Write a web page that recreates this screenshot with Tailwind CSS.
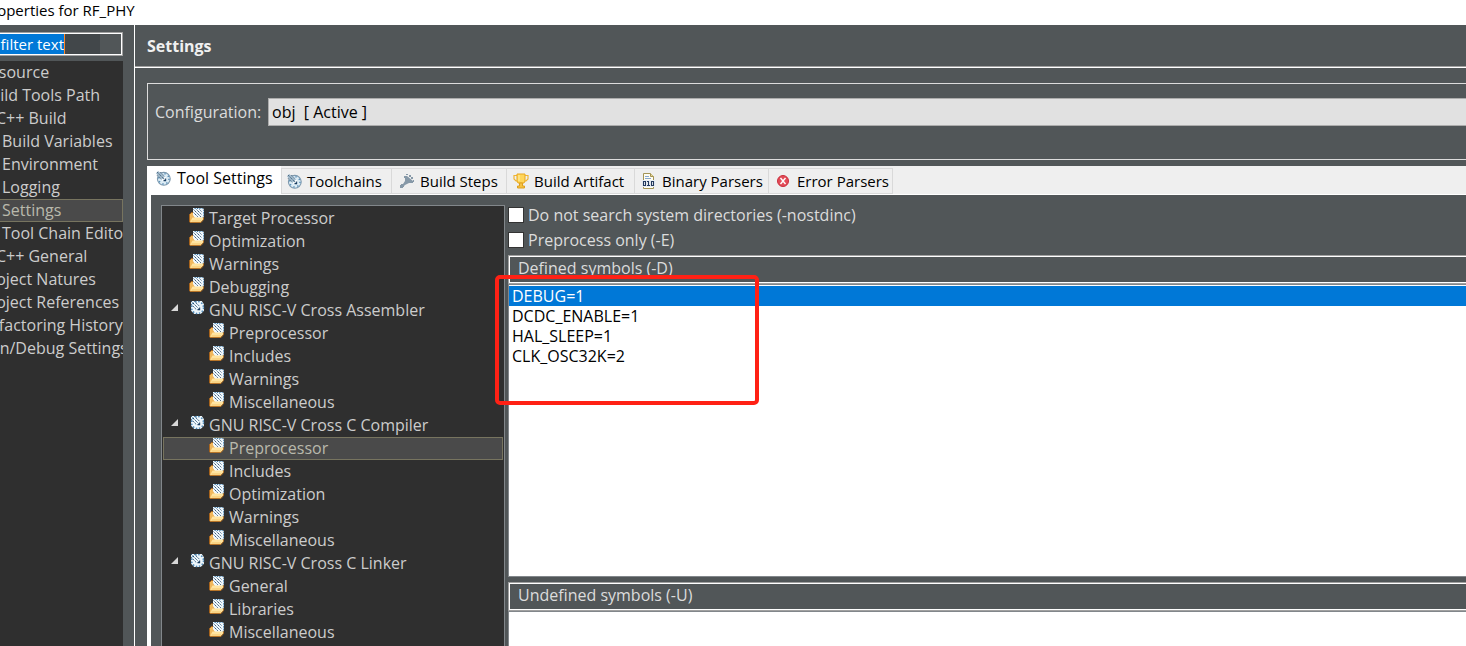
<!DOCTYPE html>
<html lang="en">
<head>
<meta charset="utf-8">
<title>Properties for RF_PHY</title>
<script src="https://cdn.jsdelivr.net/npm/@tailwindcss/browser@4"></script>
</head>
<body class="h-screen overflow-hidden bg-[#515658] font-['Open_Sans','Noto_Sans',sans-serif] text-[16px] leading-[23px] text-[#dcdcdc]">
<svg class="hidden" aria-hidden="true">
  <symbol id="gauge" viewBox="0 0 14 14">
    <circle cx="7.3" cy="7.3" r="6" fill="#dcecf5" stroke="#7d98ad" stroke-width="1"/>
    <circle cx="7.3" cy="7.3" r="4.8" fill="none" stroke="#5b8fb8" stroke-width="1.4" stroke-dasharray="1.2 2.57"/>
    <circle cx="7.5" cy="7.5" r="2.2" fill="#fff"/>
    <path d="M0 2 2 0 7 4 8 8 4 7z" fill="#9db6c8"/>
    <path d="M1 1 8 8M1 4 5 8M4 1 8 5" stroke="#37556f" stroke-width=".8" stroke-dasharray="1.2 .9"/>
    <path d="M7 9h2v-2" fill="none" stroke="#173c61"/>
  </symbol>
  <symbol id="ball" viewBox="0 0 14 14">
    <path d="M1 1h10l2 3v6l-3 3H4l-3-3z" fill="#eef7fc"/>
    <circle cx="7" cy="7" r="5.600" fill="none" stroke="#4a86b5" stroke-width="1.4" stroke-dasharray="1.4 1.53"/>
    <path d="M1 1 8 8M1 4 6 9M4 1 9 6" stroke="#244b6d" stroke-width=".9" stroke-dasharray="1.6 .7"/>
    <path d="M7 9h2v-2" fill="none" stroke="#173c61"/>
  </symbol>
  <symbol id="folder" viewBox="0 0 16 16">
    <path d="M.5 13V6.500l2-2H5l1 1h7.500V11L11 14H.5z" fill="#f0b75b" stroke="#a8641c"/>
    <path d="M4 0h10l1 2v6l-1 2H6L4 7z" fill="#f2f9fd"/>
    <path d="M5.500.5h8l1 2v5l-1 2" fill="none" stroke="#3c7cae" stroke-dasharray="1.300 1.100"/>
    <path d="M4.500 1.500 12 9M4.500 4.500 9 9M7.500 1.500l5 5M10.500 1.500l2 2" stroke="#21476a" stroke-width=".9" stroke-dasharray="1.600 .6"/>
    <path d="M1 14 3.500 9.500h11v1.500L12 14z" fill="#ffe4a0"/>
    <path d="M1 14.500h11l2.500-3v-2" fill="none" stroke="#b87528"/>
    <path d="M2.500 13H12" stroke="#f4c469"/>
  </symbol>
  <symbol id="steps" viewBox="0 0 16 16">
    <path d="M5 3h3l6 5v2h-4l-4 2-1 1v1H4v1H1v-3h1v-1h2l2-3V5H5z" fill="#8799a8"/>
    <path d="M7 1h2v1H7zM10 2h2v2h-2zM12 4h2v2h-2zM14 7h1v2h-1z" fill="#8799a8"/>
  </symbol>
  <symbol id="trophy" viewBox="0 0 16 16">
    <path d="M4 2.5H1V6l2 2h2M12 2.5h3V6l-2 2h-2" fill="none" stroke="#eeb432" stroke-width="1.2"/>
    <path d="M4 1h8v7l-1 2H5L4 8z" fill="#ffd65b" stroke="#e9a71e"/>
    <path d="M6 2v6" stroke="#fff0a8"/>
    <path d="M6.500 10h3v3h2v2h-7v-2h2z" fill="#f6c242" stroke="#dda021"/>
  </symbol>
  <symbol id="binary" viewBox="0 0 14 16">
    <path d="M1.5.5h7l3 3v12h-10z" fill="#fffdf2" stroke="#a39456"/>
    <path d="M8.500.5v3h3" fill="#ead998" stroke="#a39456"/>
    <path d="M3 3.500h4M3 5.500h6" stroke="#86a7cf"/>
    <path d="M0 7h14v7H0z" fill="#e9eef3"/>
    <path d="M1.500 8.500h2v4h-2zM5 8.500h1.500v4M5 12.500h3M9.500 8.500h2v4h-2z" fill="none" stroke="#23395d" stroke-width="1.100"/>
  </symbol>
  <symbol id="error" viewBox="0 0 12 12">
    <circle cx="6" cy="6" r="5.500" fill="#e34b57" stroke="#c92f3d"/>
    <path d="m3.500 3 5 6M8.500 3l-5 6" stroke="#fff" stroke-width="1.400"/>
  </symbol>
</svg>

<div class="flex h-screen flex-col">
  <header class="h-[25px] shrink-0 overflow-hidden bg-white text-black">
    <h1 class="-ml-[18px] text-[15px] leading-5 whitespace-nowrap">Properties for RF_PHY</h1>
  </header>

  <div class="flex min-h-0 flex-1">
    <aside class="flex w-[134px] shrink-0 flex-col overflow-hidden pt-[7px] pr-[11px]">
      <div class="flex h-6 shrink-0 overflow-hidden border border-l-0 border-[#a0a0a0]">
        <div class="flex flex-1 border-y border-r border-white">
          <input aria-label="Filter" value="type filter text" class="-ml-[50px] h-5 w-[114px] shrink-0 bg-[#0078d7] text-right text-[15px] text-white outline-none">
          <span class="w-9 shrink-0 border-l border-[#ff8728] bg-[#42474a]"></span>
        </div>
      </div>
      <ul role="tree" aria-label="Pages" class="mt-[5px] flex-1 overflow-hidden bg-[#2f2f2f] whitespace-nowrap text-[#cccccc]">
        <li role="treeitem" class="-ml-5">Resource</li>
        <li role="treeitem" class="-ml-5">Build Tools Path</li>
        <li role="treeitem" class="-ml-5">C/C++ Build</li>
        <li role="treeitem" class="pl-0.5">Build Variables</li>
        <li role="treeitem" class="pl-0.5">Environment</li>
        <li role="treeitem" class="pl-0.5">Logging</li>
        <li role="treeitem" aria-selected="true" class="border border-l-0 border-[#77745f] bg-[#4a4a4a] pl-0.5 leading-[21px] text-[#b9b9ac]">Settings</li>
        <li role="treeitem" class="pl-0.5">Tool Chain Editor</li>
        <li role="treeitem" class="-ml-5">C/C++ General</li>
        <li role="treeitem" class="-ml-5">Project Natures</li>
        <li role="treeitem" class="-ml-5">Project References</li>
        <li role="treeitem" class="-ml-5">Refactoring History</li>
        <li role="treeitem" class="-ml-5">Run/Debug Settings</li>
      </ul>
    </aside>

    <main class="flex min-w-0 flex-1 flex-col border-l border-white">
      <div class="h-[42px] shrink-0 border-b border-[#a0a0a0] pl-3">
        <h2 class="leading-[43px] font-bold text-[#f0f0f0]">Settings</h2>
      </div>
      <div class="h-px shrink-0 bg-white"></div>

      <div class="flex min-h-0 flex-1 flex-col pt-[15px] pl-3">
        <div class="flex h-[77px] shrink-0 items-start border border-r-0 border-[#dcdcdc] pt-3.5 pl-[7px]">
          <label for="configuration" class="w-[113px] shrink-0 leading-7">Configuration:</label>
          <select id="configuration" class="h-7 min-w-0 flex-1 appearance-none border border-r-0 border-[#acacac] bg-[#e1e1e1] pl-[3px] text-black">
            <option>obj&nbsp; [ Active ]</option>
          </select>
        </div>

        <div role="tablist" class="mt-1.5 flex h-[29px] shrink-0 items-end border-b border-white bg-[#efefef] text-[15px] whitespace-nowrap text-black">
          <button role="tab" aria-selected="true" class="flex h-7 w-[134px] items-center gap-1.5 bg-white pb-1 pl-[9px] text-[16px]"><svg class="size-[15px]"><use href="#gauge"/></svg>Tool Settings</button>
          <button role="tab" class="flex h-[26px] w-[111px] items-center gap-[5px] border border-[#d9d9d9] pl-[5px]"><svg class="size-[15px]"><use href="#gauge"/></svg>Toolchains</button>
          <button role="tab" class="flex h-[26px] w-[115px] items-center gap-[5px] border border-l-0 border-[#d9d9d9] pl-[7px]"><svg class="size-4"><use href="#steps"/></svg>Build Steps</button>
          <button role="tab" class="flex h-[26px] w-[128px] items-center gap-[5px] border border-l-0 border-[#d9d9d9] pl-1.5"><svg class="size-4"><use href="#trophy"/></svg>Build Artifact</button>
          <button role="tab" class="flex h-[26px] w-[134px] items-center gap-1.5 border border-l-0 border-[#d9d9d9] pl-[7px]"><svg class="h-4 w-3.5"><use href="#binary"/></svg>Binary Parsers</button>
          <button role="tab" class="flex h-[26px] w-[124px] items-center gap-2 border border-l-0 border-[#d9d9d9] pl-2"><svg class="size-3"><use href="#error"/></svg>Error Parsers</button>
        </div>

        <div class="flex min-h-0 flex-1 border-l-4 border-white pt-2.5 pl-2.5">
          <ul role="tree" aria-label="Tools" class="w-[344px] shrink-0 overflow-hidden border border-b-0 border-[#82878b] bg-[#2f2f2f] px-px pt-px whitespace-nowrap text-[#cccccc]">
            <li role="treeitem" class="flex gap-1 pl-[26px]"><svg class="mt-px size-4"><use href="#folder"/></svg>Target Processor</li>
            <li role="treeitem" class="flex gap-1 pl-[26px]"><svg class="mt-px size-4"><use href="#folder"/></svg>Optimization</li>
            <li role="treeitem" class="flex gap-1 pl-[26px]"><svg class="mt-px size-4"><use href="#folder"/></svg>Warnings</li>
            <li role="treeitem" class="flex gap-1 pl-[26px]"><svg class="mt-px size-4"><use href="#folder"/></svg>Debugging</li>
            <li role="treeitem" aria-expanded="true" class="flex pl-2"><svg class="mt-[5px] mr-3 size-[7px]" viewBox="0 0 7 7"><path d="M7 0v7H0z" fill="#d8d8d8"/></svg><svg class="mt-px mr-1 size-[15px]"><use href="#ball"/></svg>GNU RISC-V Cross Assembler</li>
            <li role="treeitem" class="flex gap-1 pl-[46px]"><svg class="mt-px size-4"><use href="#folder"/></svg>Preprocessor</li>
            <li role="treeitem" class="flex gap-1 pl-[46px]"><svg class="mt-px size-4"><use href="#folder"/></svg>Includes</li>
            <li role="treeitem" class="flex gap-1 pl-[46px]"><svg class="mt-px size-4"><use href="#folder"/></svg>Warnings</li>
            <li role="treeitem" class="flex gap-1 pl-[46px]"><svg class="mt-px size-4"><use href="#folder"/></svg>Miscellaneous</li>
            <li role="treeitem" aria-expanded="true" class="flex pl-2"><svg class="mt-[5px] mr-3 size-[7px]" viewBox="0 0 7 7"><path d="M7 0v7H0z" fill="#d8d8d8"/></svg><svg class="mt-px mr-1 size-[15px]"><use href="#ball"/></svg>GNU RISC-V Cross C Compiler</li>
            <li role="treeitem" aria-selected="true" class="flex gap-1 border border-[#77745f] bg-[#4a4a4a] pl-[45px] leading-[21px] text-[#b9b9ac]"><svg class="size-4"><use href="#folder"/></svg>Preprocessor</li>
            <li role="treeitem" class="flex gap-1 pl-[46px]"><svg class="mt-px size-4"><use href="#folder"/></svg>Includes</li>
            <li role="treeitem" class="flex gap-1 pl-[46px]"><svg class="mt-px size-4"><use href="#folder"/></svg>Optimization</li>
            <li role="treeitem" class="flex gap-1 pl-[46px]"><svg class="mt-px size-4"><use href="#folder"/></svg>Warnings</li>
            <li role="treeitem" class="flex gap-1 pl-[46px]"><svg class="mt-px size-4"><use href="#folder"/></svg>Miscellaneous</li>
            <li role="treeitem" aria-expanded="true" class="flex pl-2"><svg class="mt-[5px] mr-3 size-[7px]" viewBox="0 0 7 7"><path d="M7 0v7H0z" fill="#d8d8d8"/></svg><svg class="mt-px mr-1 size-[15px]"><use href="#ball"/></svg>GNU RISC-V Cross C Linker</li>
            <li role="treeitem" class="flex gap-1 pl-[46px]"><svg class="mt-px size-4"><use href="#folder"/></svg>General</li>
            <li role="treeitem" class="flex gap-1 pl-[46px]"><svg class="mt-px size-4"><use href="#folder"/></svg>Libraries</li>
            <li role="treeitem" class="flex gap-1 pl-[46px]"><svg class="mt-px size-4"><use href="#folder"/></svg>Miscellaneous</li>
          </ul>

          <div class="flex min-w-0 flex-1 flex-col pl-[3px]">
            <label class="flex h-[25px] shrink-0 items-start gap-1 leading-5 whitespace-nowrap"><input type="checkbox" class="mt-0.5 size-4 shrink-0 appearance-none border border-[#333333] bg-white">Do not search system directories (-nostdinc)</label>
            <label class="flex h-[25px] shrink-0 items-start gap-1 leading-5 whitespace-nowrap"><input type="checkbox" class="mt-0.5 size-4 shrink-0 appearance-none border border-[#333333] bg-white">Preprocess only (-E)</label>

            <div class="relative flex shrink-0 flex-col">
              <div class="border border-r-0 border-[#a0a0a0]">
                <h3 id="defined" class="h-[27px] border border-r-0 border-white pl-2 leading-[22px]">Defined symbols (-D)</h3>
              </div>
              <ul role="listbox" aria-labelledby="defined" class="h-[293px] border border-r-0 border-[#82878b] bg-white pt-px leading-5 text-black">
                <li role="option" aria-selected="true" class="bg-[#0078d7] pl-[3px] text-white">DEBUG=1</li>
                <li role="option" class="pl-[3px]">DCDC_ENABLE=1</li>
                <li role="option" class="pl-[3px]">HAL_SLEEP=1</li>
                <li role="option" class="pl-[3px]">CLK_OSC32K=2</li>
              </ul>
              <div class="pointer-events-none absolute top-5 -left-[13px] h-[130px] w-[264px] rounded-[5px] border-4 border-[#ff2115]"></div>
            </div>

            <div class="mt-[5px] shrink-0 border border-r-0 border-[#a0a0a0]">
              <h3 id="undefined" class="h-[27px] border border-r-0 border-white pl-2 leading-[22px]">Undefined symbols (-U)</h3>
            </div>
            <ul role="listbox" aria-labelledby="undefined" class="flex-1 border border-r-0 border-b-0 border-[#82878b] bg-white"></ul>
          </div>
        </div>
      </div>
    </main>
  </div>
</div>
</body>
</html>
